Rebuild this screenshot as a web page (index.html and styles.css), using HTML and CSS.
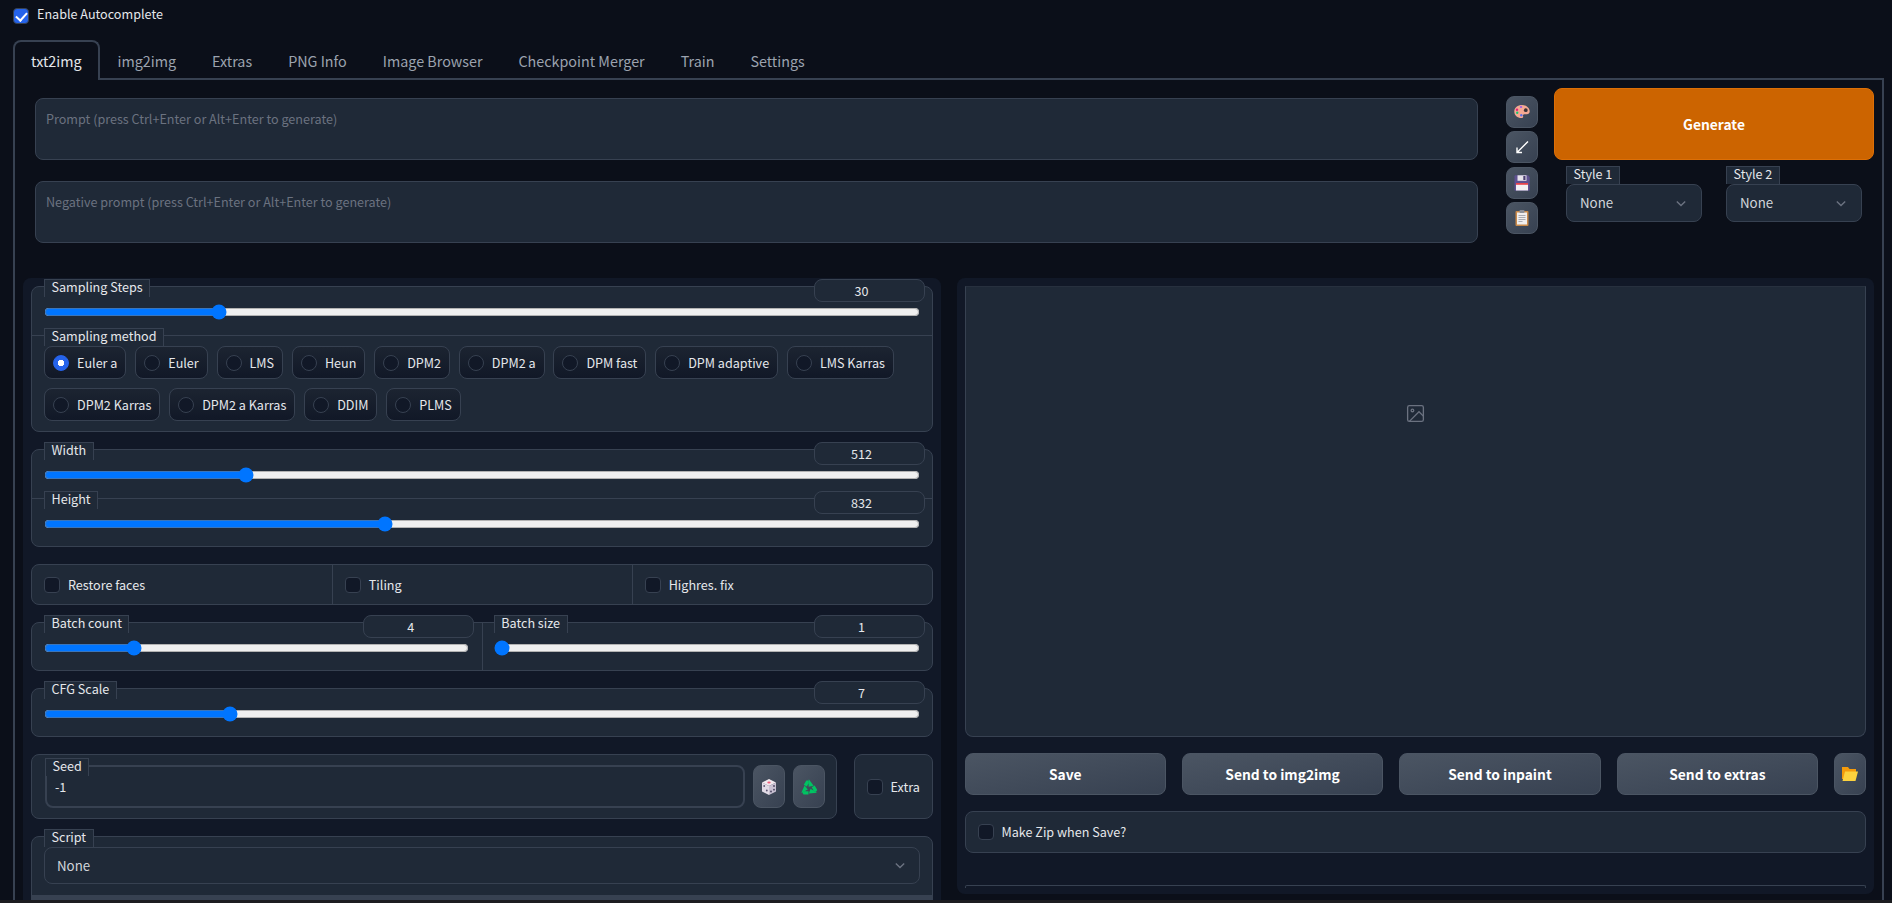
FILE: index.html
```html
<!DOCTYPE html>
<html lang="en">
<head>
<meta charset="utf-8">
<title>Stable Diffusion</title>
<link rel="stylesheet" href="styles.css">
</head>
<body>
<div class="app">
  <label class="auto"><input class="check" type="checkbox" checked><span>Enable Autocomplete</span></label>
  <nav class="tabs">
    <button class="tab active">txt2img</button>
    <button class="tab">img2img</button>
    <button class="tab">Extras</button>
    <button class="tab">PNG Info</button>
    <button class="tab">Image Browser</button>
    <button class="tab">Checkpoint Merger</button>
    <button class="tab">Train</button>
    <button class="tab">Settings</button>
  </nav>
  <main class="panel">
    <section class="toprow">
      <div class="prompts">
        <textarea class="prompt" placeholder="Prompt (press Ctrl+Enter or Alt+Enter to generate)"></textarea>
        <textarea class="prompt" placeholder="Negative prompt (press Ctrl+Enter or Alt+Enter to generate)"></textarea>
      </div>
      <div class="tools">
        <button class="tool">
          <svg class="ico" viewBox="0 0 16 16"><path d="M8 1C3.800 1 .3 3.600.3 7.400c0 3.900 3.200 6.600 7 6.600 1.500 0 2.100-.8 1.800-1.800-.3-1.100.2-2 1.400-2h2.300c1.700 0 2.900-1.100 2.900-2.900C15.700 3.700 12 1 8 1z" fill="#f5a992"/><circle cx="3" cy="5.700" r="1.200" fill="#e8207a"/><circle cx="7" cy="2.900" r="1.200" fill="#a866dc"/><circle cx="3.200" cy="8.700" r="1.200" fill="#1fc46f"/><circle cx="7.300" cy="11.300" r="1.200" fill="#5a6ee8"/><circle cx="11.800" cy="6.200" r="1.900" fill="#3b3238"/></svg>
        </button>
        <button class="tool">
          <svg class="ico" viewBox="0 0 16 16"><path d="M14 2.500 3.500 13M3 8.500v5h5" fill="none" stroke="#fff" stroke-width="1.400"/></svg>
        </button>
        <button class="tool">
          <svg class="ico" viewBox="0 0 16 16"><path d="M.5 1.500C.5.7 1 .3 1.500.3h12.500l1.700 1.700v12.700c0 .6-.4 1-1 1h-13.200c-.6 0-1-.4-1-1z" fill="#5f5190"/><rect x="3.500" y=".3" width="9" height="5.500" fill="#e6e2ea"/><rect x="9.300" y="1" width="2.200" height="4" fill="#4a3f70"/><rect x="2" y="8" width="12" height="7.500" fill="#f4f1f4"/><rect x="2" y="8" width="12" height="1.800" fill="#e8444d"/></svg>
        </button>
        <button class="tool">
          <svg class="ico" viewBox="0 0 16 16"><rect x="1.500" y="1" width="13" height="15" rx="1" fill="#c98a4a"/><rect x="3" y="2.500" width="10" height="12" fill="#f0eeee"/><rect x="5.500" y="0" width="5" height="3" rx=".8" fill="#8c8f96"/><path d="M4.500 5.500h7M4.500 7.500h7M4.500 9.500h7M4.500 11.500h4" stroke="#a9abb2" stroke-width="1"/></svg>
        </button>
      </div>
      <div class="actions">
        <button class="generate">Generate</button>
        <div class="styles">
          <div class="style">
            <span class="tag">Style 1</span>
            <div class="select"><span>None</span><svg class="chev" viewBox="0 0 12 8"><path d="M1 1.500l5 5 5-5" fill="none" stroke="#6b7280" stroke-width="1.700"/></svg></div>
          </div>
          <div class="style">
            <span class="tag">Style 2</span>
            <div class="select"><span>None</span><svg class="chev" viewBox="0 0 12 8"><path d="M1 1.500l5 5 5-5" fill="none" stroke="#6b7280" stroke-width="1.700"/></svg></div>
          </div>
        </div>
      </div>
    </section>
    <section class="cols">
      <div class="col col-left">
        <div class="block">
          <div class="cell">
            <div class="head"><span class="tag">Sampling Steps</span><input class="num" type="number" value="30"></div>
            <input class="range" type="range" min="1" max="150" value="30">
          </div>
          <div class="cell ruled methods">
            <div class="methods-head"><span class="tag">Sampling method</span></div>
            <div class="radios">
              <label class="radio"><input type="radio" name="m" checked><span>Euler a</span></label>
              <label class="radio"><input type="radio" name="m"><span>Euler</span></label>
              <label class="radio"><input type="radio" name="m"><span>LMS</span></label>
              <label class="radio"><input type="radio" name="m"><span>Heun</span></label>
              <label class="radio"><input type="radio" name="m"><span>DPM2</span></label>
              <label class="radio"><input type="radio" name="m"><span>DPM2 a</span></label>
              <label class="radio"><input type="radio" name="m"><span>DPM fast</span></label>
              <label class="radio"><input type="radio" name="m"><span>DPM adaptive</span></label>
              <label class="radio"><input type="radio" name="m"><span>LMS Karras</span></label>
              <label class="radio"><input type="radio" name="m"><span>DPM2 Karras</span></label>
              <label class="radio"><input type="radio" name="m"><span>DPM2 a Karras</span></label>
              <label class="radio"><input type="radio" name="m"><span>DDIM</span></label>
              <label class="radio"><input type="radio" name="m"><span>PLMS</span></label>
            </div>
          </div>
        </div>
        <div class="block">
          <div class="cell">
            <div class="head"><span class="tag">Width</span><input class="num" type="number" value="512"></div>
            <input class="range" type="range" min="64" max="2048" value="512">
          </div>
          <div class="cell ruled">
            <div class="head"><span class="tag">Height</span><input class="num" type="number" value="832"></div>
            <input class="range" type="range" min="64" max="2048" value="832">
          </div>
        </div>
        <div class="block triple">
          <label class="opt"><input class="check" type="checkbox"><span>Restore faces</span></label>
          <label class="opt"><input class="check" type="checkbox"><span>Tiling</span></label>
          <label class="opt"><input class="check" type="checkbox"><span>Highres. fix</span></label>
        </div>
        <div class="block double">
          <div class="cell">
            <div class="head"><span class="tag">Batch count</span><input class="num" type="number" value="4"></div>
            <input class="range" type="range" min="1" max="16" value="4">
          </div>
          <div class="cell">
            <div class="head"><span class="tag">Batch size</span><input class="num" type="number" value="1"></div>
            <input class="range" type="range" min="1" max="8" value="1">
          </div>
        </div>
        <div class="block">
          <div class="cell">
            <div class="head"><span class="tag">CFG Scale</span><input class="num" type="number" value="7"></div>
            <input class="range" type="range" min="1" max="30" value="7">
          </div>
        </div>
        <div class="seedrow">
          <div class="block seed">
            <div class="seed-field">
              <span class="tag seed-tag">Seed</span>
              <input class="seed-input" type="text" value="-1">
            </div>
            <button class="dice">
              <svg class="ico" viewBox="0 0 16 16"><path d="M8 0 15 3.500 8 7 1 3.500z" fill="#f1e9ee"/><path d="M1 3.500 8 7v9l-7-3.500z" fill="#e2dbe6"/><path d="M15 3.500 8 7v9l7-3.500z" fill="#c9c1d2"/><ellipse cx="8" cy="3.400" rx="1.700" ry="1" fill="#ef5f7c"/><circle cx="3.200" cy="7" r=".9" fill="#5b5470"/><circle cx="5.800" cy="11.500" r=".9" fill="#5b5470"/><circle cx="10" cy="12.500" r=".9" fill="#4a4360"/><circle cx="13" cy="10.700" r=".9" fill="#4a4360"/><circle cx="13" cy="7" r=".9" fill="#4a4360"/></svg>
            </button>
            <button class="dice">
              <svg class="ico" viewBox="0 0 16 16">
                <g id="recycle-arm"><path d="M4.300 6.600 6.300 3.100h1.500" fill="none" stroke="#00c462" stroke-width="3.400"/><path d="M7.800.2l4.800 6.600-5 .9z" fill="#00c462"/></g>
                <use href="#recycle-arm" transform="rotate(120 8 9.300)"/>
                <use href="#recycle-arm" transform="rotate(240 8 9.300)"/>
              </svg>
            </button>
          </div>
          <div class="block extra">
            <label class="extra-opt"><input class="check" type="checkbox"><span>Extra</span></label>
          </div>
        </div>
        <div class="block script">
          <div class="script-cell">
            <div class="methods-head"><span class="tag">Script</span></div>
            <div class="select wide"><span>None</span><svg class="chev" viewBox="0 0 12 8"><path d="M1 1.500l5 5 5-5" fill="none" stroke="#6b7280" stroke-width="1.700"/></svg></div>
          </div>
          <div class="script-bar"></div>
        </div>
      </div>
      <div class="col col-right">
        <div class="gallery">
          <svg class="picture" viewBox="0 0 24 24" fill="none" stroke="#6b7280" stroke-width="1.500"><rect x="3" y="3" width="18" height="18" rx="2"/><circle cx="8.500" cy="8.500" r="1.500"/><path d="M21 15l-5-5L5 21"/></svg>
        </div>
        <div class="saves">
          <button class="btn">Save</button>
          <button class="btn">Send to img2img</button>
          <button class="btn">Send to inpaint</button>
          <button class="btn">Send to extras</button>
          <button class="btn folder">
            <svg class="ico" viewBox="0 0 16 16"><path d="M0 1h6l1.500 2H14v10H0z" fill="#f59b0b"/><path d="M3 5.500h13L13.500 15H0.500z" fill="#fdd23e"/></svg>
          </button>
        </div>
        <label class="block zip"><input class="check" type="checkbox"><span>Make Zip when Save?</span></label>
        <div class="rule"></div>
      </div>
    </section>
  </main>
</div>
<div class="strip"></div>
</body>
</html>
```

FILE: styles.css
```css
* { box-sizing: border-box; }

html, body {
  margin: 0;
  height: 903px;
  overflow: hidden;
  background: #0b0f19;
}

body {
  font-family: "Noto Sans CJK SC", "Noto Sans CJK JP", "Open Sans", sans-serif;
  font-size: 12.600px;
  line-height: 18px;
  color: #e5e7eb;
}

button, input, textarea {
  font: inherit;
  color: inherit;
}

.app {
  height: 900px;
  overflow: hidden;
}

.strip {
  height: 3px;
  background: #1c1d20;
}

.check {
  appearance: none;
  flex: none;
  position: relative;
  width: 16px;
  height: 16px;
  margin: 0;
  background: #111827;
  border: 1px solid #374151;
  border-radius: 4px;
}

.check:checked {
  background: #2563eb;
  border-color: #374151;
}

.check:checked::after {
  content: "";
  position: absolute;
  left: 4px;
  top: 1px;
  width: 5px;
  height: 9px;
  border: solid #fff;
  border-width: 0 2px 2px 0;
  transform: rotate(42deg);
}

.auto {
  display: flex;
  align-items: center;
  gap: 8px;
  height: 16px;
  margin: 8px 0 0 13px;
}

.auto span {
  margin-top: -4px;
}

.tabs {
  display: flex;
  height: 40px;
  margin: 16px 0 0 13px;
  position: relative;
  z-index: 1;
}

.tab {
  height: 40px;
  padding: 0 16px;
  background: none;
  border: 2px solid transparent;
  border-bottom: 0;
  border-radius: 8px 8px 0 0;
  font-size: 14.330px;
  color: #9ca3af;
}

.tab.active {
  background: #0b0f19;
  border-color: #374151;
  color: #e5e7eb;
}

.panel {
  margin: -2px 8px 0 13px;
  height: 900px;
  border: 2px solid #374151;
}

.toprow {
  display: flex;
  padding: 8px 8px 35px 20px;
}

.prompts {
  display: flex;
  flex-direction: column;
  gap: 21px;
  width: 1443px;
  margin-top: 10px;
}

.prompt {
  display: block;
  width: 100%;
  height: 62px;
  padding: 10px;
  background: #1f2937;
  border: 1px solid #374151;
  border-radius: 8px;
  line-height: 20px;
  resize: none;
  outline: 0;
}

.prompt::placeholder {
  color: #6b7280;
  opacity: 1;
}

.tools {
  display: flex;
  flex-direction: column;
  gap: 3.330px;
  width: 32px;
  margin: 8px 16px 0 28px;
}

.tool, .dice, .btn {
  display: flex;
  align-items: center;
  justify-content: center;
  padding: 0;
  background: linear-gradient(to bottom right, #4b5563, #374151);
  border: 1px solid #4b5563;
  border-radius: 8px;
}

.tool {
  width: 32px;
  height: 32px;
}

.ico {
  display: block;
  width: 16px;
  height: 16px;
}

.actions {
  width: 320px;
}

.generate {
  display: block;
  width: 100%;
  height: 72px;
  background: #cc6400;
  border: 1px solid #dd6f06;
  border-radius: 8px;
  font-size: 13.800px;
  font-weight: 700;
  color: #fff;
}

.styles {
  display: flex;
  gap: 24px;
  margin-top: 6px;
  padding: 0 12px;
}

.style {
  flex: 1;
}

.tag {
  display: block;
  width: max-content;
  height: 18px;
  padding: 0 6.500px;
  background: #1f2937;
  border: 1px solid #374151;
  border-bottom: 0;
  line-height: 14px;
  color: #e5e7eb;
}

.select {
  display: flex;
  align-items: center;
  justify-content: space-between;
  height: 38px;
  padding: 0 15px 0 13px;
  background: #1f2937;
  border: 1px solid #374151;
  border-radius: 8px;
  font-size: 13.300px;
  color: #d1d5db;
}

.chev {
  display: block;
  width: 10px;
  height: 7px;
}

.cols {
  display: grid;
  grid-template-columns: 1fr 1fr;
  gap: 16px;
  align-items: start;
  padding: 0 8px;
}

.col {
  background: #111827;
  border-radius: 8px;
  padding: 8px;
}

.col-left {
  display: flex;
  flex-direction: column;
  gap: 17px;
  padding: 8px 8px 20px;
}

.block {
  background: #1f2937;
  border: 1px solid #374151;
  border-radius: 8px;
}

.cell {
  display: flow-root;
  height: 48px;
  padding: 0 7px 0 12px;
}

.cell:only-child {
  height: 47px;
}

.cell.ruled {
  border-top: 1px solid #374151;
}

.cell.methods {
  height: auto;
  padding-bottom: 10px;
}

.head {
  display: flex;
  justify-content: space-between;
  align-items: flex-start;
  height: 23px;
  margin-top: -8px;
}

.methods-head {
  margin-top: -8px;
}

.num {
  width: 111px;
  height: 23px;
  padding: 0;
  background: #1f2937;
  border: 1px solid #374151;
  border-radius: 8px;
  text-align: center;
  outline: 0;
}

.range {
  display: block;
  width: calc(100% - 5px);
  height: 16px;
  margin: 2px 5px 0 0;
}

.radios {
  display: flex;
  flex-wrap: wrap;
  gap: 9px 8.800px;
}

.radio {
  display: flex;
  align-items: center;
  gap: 8px;
  height: 33px;
  padding: 0 8px;
  background: linear-gradient(#1c2431, #111827);
  border: 1px solid #374151;
  border-radius: 8px;
}

.radio input {
  appearance: none;
  width: 16px;
  height: 16px;
  margin: 0;
  background: #111827;
  border: 1px solid #374151;
  border-radius: 50%;
}

.radio input:checked {
  background: radial-gradient(circle, #fff 0 3px, #2563eb 3.500px);
  border-color: #2563eb;
}

.triple {
  display: grid;
  grid-template-columns: 1fr 1fr 1fr;
  height: 41px;
}

.opt {
  display: flex;
  align-items: center;
  gap: 8px;
  padding-left: 12px;
}

.opt + .opt {
  border-left: 1px solid #374151;
}

.double {
  display: grid;
  grid-template-columns: 1fr 1fr;
  height: 49px;
}

.double .cell {
  height: 47px;
  padding-right: 8px;
}

.double .cell + .cell {
  padding: 0 7px 0 11px;
  border-left: 1px solid #374151;
}

.seedrow {
  display: flex;
  gap: 17px;
}

.seed {
  display: flex;
  flex: 1;
  gap: 8px;
  height: 65px;
  padding: 10px 11px 10px 13px;
}

.seed-field {
  flex: 1;
  border: 2px solid #374151;
  border-radius: 8px;
}

.seed-tag {
  margin: -9px 0 0 -2px;
}

.seed-input {
  display: block;
  width: 100%;
  height: 21px;
  padding: 0 8px;
  background: none;
  border: 0;
  outline: 0;
}

.dice {
  flex: none;
  width: 32px;
  height: 43px;
}

.extra {
  display: flex;
  align-items: center;
  width: 79px;
  height: 65px;
  padding-left: 12px;
}

.extra-opt {
  display: flex;
  align-items: center;
  gap: 8px;
}

.script-cell {
  display: flow-root;
  padding: 0 12px 11px 12px;
}

.select.wide {
  height: 37px;
  padding: 0 14px 0 12px;
}

.script-bar {
  height: 20px;
  background: #374151;
}

.gallery {
  display: flex;
  justify-content: center;
  height: 451px;
  padding-top: 116px;
  background: #1f2937;
  border: 1px solid #374151;
  border-top-color: #27303e;
  border-radius: 0 0 8px 8px;
}

.picture {
  display: block;
  width: 21px;
  height: 21px;
}

.saves {
  display: flex;
  gap: 16px;
  margin-top: 16px;
}

.btn {
  flex: 1;
  height: 42px;
  font-size: 13.800px;
  font-weight: 700;
  color: #fff;
}

.btn.folder {
  flex: none;
  width: 32px;
}

.zip {
  display: flex;
  align-items: center;
  gap: 8px;
  height: 42px;
  margin-top: 16px;
  padding-left: 12px;
}

.rule {
  height: 3px;
  margin: 32px 0 -2px;
  border: 1px solid #374151;
  border-bottom: 0;
  border-radius: 2px 2px 0 0;
}
```
